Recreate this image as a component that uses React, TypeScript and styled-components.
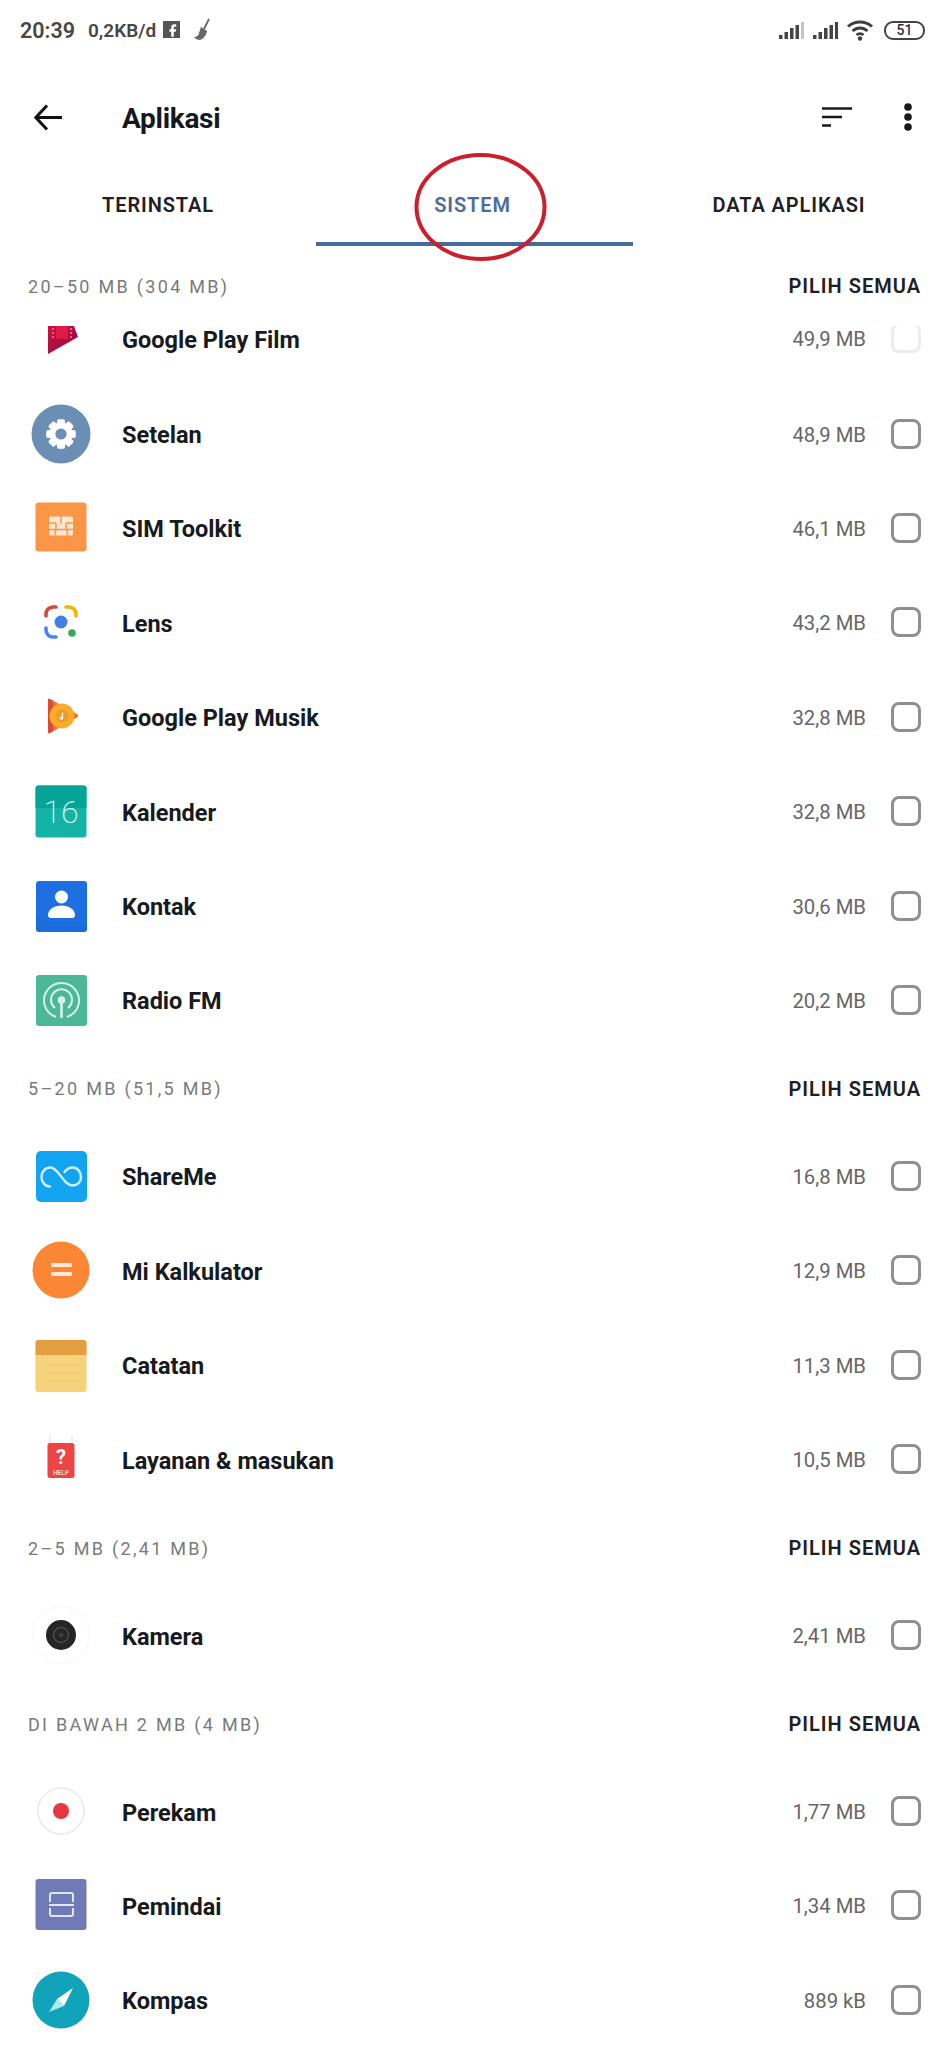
import React from "react";
import styled, { createGlobalStyle } from "styled-components";
import { Facebook } from "lucide-react";

const GlobalStyle = createGlobalStyle`
  html, body {
    margin: 0;
    padding: 0;
    background: #fff;
    font-family: Roboto, "Liberation Sans", sans-serif;
  }
`;

const Page = styled.div`
  position: relative;
  width: 945px;
  height: 2048px;
  overflow: hidden;
  background: #fff;
`;

const StatusBar = styled.div`
  height: 60px;
  padding: 0 20px 0 20px;
  display: flex;
  align-items: center;
  justify-content: space-between;
  color: #474747;
`;

const StatusGroup = styled.div`
  display: flex;
  align-items: center;
`;

const Clock = styled.span`
  font-size: 21.5px;
  font-weight: 600;
  margin-right: 13px;
`;

const NetSpeed = styled.span`
  font-size: 19px;
  font-weight: 600;
  margin-right: 7px;
`;

const FbBadge = styled.span`
  width: 17px;
  height: 17px;
  background: #555;
  color: #fff;
  display: flex;
  align-items: flex-end;
  justify-content: flex-end;
  overflow: hidden;
  margin-right: 13px;
  margin-top: -2px;
`;

const StatusSvg = styled.svg<{ $gap?: number }>`
  display: block;
  margin-left: ${(p) => p.$gap ?? 0}px;
`;

const Battery = styled.span`
  width: 37px;
  height: 15px;
  border: 2px solid #444;
  border-radius: 9px;
  margin-left: 8px;
  font-size: 14px;
  font-weight: 500;
  line-height: 15px;
  text-align: center;
  color: #333;
`;

const Toolbar = styled.div`
  height: 114px;
  padding: 0 33px 0 34px;
  display: flex;
  align-items: center;
`;

const Title = styled.div`
  margin-left: 60px;
  padding-top: 2px;
  flex: 1;
  font-size: 28px;
  font-weight: 700;
  color: #16181d;
  letter-spacing: -0.3px;
`;

const ToolbarActions = styled.div`
  display: flex;
  align-items: center;
  gap: 52px;
`;

const TabBar = styled.div`
  height: 72px;
  display: grid;
  grid-template-columns: 316px 317px 312px;
`;

const Tab = styled.div<{ $active?: boolean }>`
  display: flex;
  align-items: flex-start;
  justify-content: center;
  padding-top: 19px;
  padding-right: ${(p) => (p.$active ? "4px" : "0")};
  box-sizing: border-box;
  font-size: 20px;
  font-weight: 600;
  letter-spacing: 0.9px;
  color: ${(p) => (p.$active ? "#4a6d9f" : "#1e2024")};
  border-bottom: 4px solid ${(p) => (p.$active ? "#466a9c" : "transparent")};
`;

const CircleMark = styled.svg`
  position: absolute;
  left: 412px;
  top: 150px;
  width: 138px;
  height: 114px;
`;

const SectionHeader = styled.div<{ $first?: boolean }>`
  height: ${(p) => (p.$first ? "80px" : "81.6px")};
  padding: 0 24px 0 28px;
  display: flex;
  align-items: center;
  justify-content: space-between;
`;

const SectionLabel = styled.span`
  font-size: 18px;
  letter-spacing: 2.3px;
  color: #7a7a7a;
`;

const SelectAll = styled.span`
  font-size: 20px;
  font-weight: 600;
  letter-spacing: 1px;
  color: #1e2024;
`;

const ClippedRow = styled.div`
  height: 61.4px;
  overflow: hidden;
`;

const ClippedInner = styled.div`
  margin-top: -34px;
`;

const Row = styled.div`
  height: 94.4px;
  padding: 0 24px 0 31px;
  display: flex;
  align-items: center;
`;

const IconSlot = styled.svg`
  width: 60px;
  height: 60px;
  flex: none;
  margin-top: -2px;
`;

const AppName = styled.span`
  margin-left: 31px;
  padding-top: 1px;
  flex: 1;
  font-size: 23.5px;
  font-weight: 700;
  color: #171a20;
`;

const AppSize = styled.span`
  font-size: 20.3px;
  color: #666;
  margin-right: 25px;
`;

const Checkbox = styled.span<{ $faded?: boolean }>`
  width: 30px;
  height: 30px;
  box-sizing: border-box;
  border: 3px solid ${(p) => (p.$faded ? "#ececec" : "#8f8f8f")};
  border-radius: 8px;
  margin-top: -2px;
`;

const gearTeeth = [0, 45, 90, 135, 180, 225, 270, 315];
const filmHoles = [20, 24, 28];

const FilmIcon = () => (
  <IconSlot viewBox="0 0 60 60">
    <defs>
      <linearGradient id="film" x1="0" y1="0" x2="1" y2="1">
        <stop offset="0" stopColor="#d0103f" />
        <stop offset="1" stopColor="#860f45" />
      </linearGradient>
    </defs>
    <polygon points="17,18 43,18 47,29 17,46" fill="url(#film)" />
    {filmHoles.map((y) => (
      <React.Fragment key={y}>
        <rect x="21" y={y} width="2" height="2" fill="#f2627f" />
        <rect x="39" y={y} width="2" height="2" fill="#f2627f" />
      </React.Fragment>
    ))}
    <rect x="25" y="18" width="12" height="13" fill="#e01a48" />
  </IconSlot>
);

const SettingsIcon = () => (
  <IconSlot viewBox="0 0 60 60">
    <circle cx="30" cy="30" r="29.500" fill="#6b8fb4" />
    {gearTeeth.map((a) => (
      <rect key={a} x="26.200" y="15.500" width="7.600" height="29" rx="1.500" fill="#fff" transform={`rotate(${a} 30 30)`} />
    ))}
    <circle cx="30" cy="30" r="11.500" fill="#fff" />
    <circle cx="30" cy="30" r="5.600" fill="#6b8fb4" />
  </IconSlot>
);

const SimIcon = () => (
  <IconSlot viewBox="0 0 60 60">
    <rect x="4.500" y="4.500" width="51" height="49" rx="3" fill="#fb9646" />
    <rect x="18" y="18.500" width="24" height="19" rx="1.500" fill="#fbe6d0" />
    <path d="M18 25h7M35 25h7M18 31.500h24M30 18.500v6.500M25 25v6.500M35 25v6.500M24 31.500V37.500M36 31.500V37.500" stroke="#fb9646" strokeWidth="1.500" fill="none" />
  </IconSlot>
);

const LensIcon = () => (
  <IconSlot viewBox="0 0 60 60">
    <path d="M15 24v-2a7 7 0 0 1 7-7h3" stroke="#db4437" strokeWidth="3.600" fill="none" strokeLinecap="round" />
    <path d="M35 15h3a7 7 0 0 1 7 7v2" stroke="#f4b400" strokeWidth="3.600" fill="none" strokeLinecap="round" />
    <path d="M15 36v2a7 7 0 0 0 7 7h3" stroke="#4285f4" strokeWidth="3.600" fill="none" strokeLinecap="round" />
    <circle cx="30" cy="30" r="6.500" fill="#3f7fe8" />
    <circle cx="41" cy="41" r="3.800" fill="#34a853" />
  </IconSlot>
);

const MusicIcon = () => (
  <IconSlot viewBox="0 0 60 60">
    <path d="M17 13c0-1 1-1.500 2-1L46 27c1.500 1 1.500 2.500 0 3.500L19 46c-1 .5-2 0-2-1z" fill="#ef6f2e" />
    <path d="M17 13c0-1 1-1.500 2-1l3 1.700v30.500L19 46c-1 .5-2 0-2-1z" fill="#dc4b35" />
    <circle cx="31" cy="29" r="12.500" fill="#f7ae28" />
    <circle cx="31" cy="29" r="6.500" fill="#f39a2a" />
    <path d="M31.500 25.500v5.500" stroke="#fff" strokeWidth="1.300" />
    <circle cx="30.300" cy="31.300" r="1.500" fill="#fff" />
  </IconSlot>
);

const CalendarIcon = () => (
  <IconSlot viewBox="0 0 60 60">
    <rect x="4.500" y="4.500" width="51" height="52" rx="3" fill="#13b3a6" />
    <path d="M4.500 27V7.500a3 3 0 0 1 3-3h45a3 3 0 0 1 3 3V27z" fill="#05a497" />
    <text x="30" y="42" textAnchor="middle" fontFamily="Roboto, sans-serif" fontWeight="200" fontSize="32" fill="#d6f7f3">16</text>
  </IconSlot>
);

const ContactIcon = () => (
  <IconSlot viewBox="0 0 60 60">
    <rect x="5" y="5" width="51" height="51" rx="3" fill="#1e6fe2" />
    <path d="M5 42l0 11a3 3 0 0 0 3 3h45a3 3 0 0 0 3-3V46H18z" fill="#1b64cf" opacity="0.35" />
    <circle cx="30.500" cy="21" r="6.500" fill="#fff" />
    <path d="M17 39c0-6.500 8-9.500 13.500-9.500S44 32.500 44 39a3 3 0 0 1-3 3H20a3 3 0 0 1-3-3z" fill="#fff" />
  </IconSlot>
);

const RadioIcon = () => (
  <IconSlot viewBox="0 0 60 60">
    <rect x="5" y="5" width="51" height="51" rx="3" fill="#4cb897" />
    <g fill="none" stroke="#d6f2e8" strokeWidth="2">
      <path d="M25 47a17.500 17.500 0 1 1 11 0" />
      <path d="M24 38a10.500 10.500 0 1 1 13 0" />
    </g>
    <circle cx="30.500" cy="30" r="3.800" fill="#d6f2e8" />
    <rect x="29.200" y="30" width="2.600" height="18" fill="#d6f2e8" />
  </IconSlot>
);

const ShareIcon = () => (
  <IconSlot viewBox="0 0 60 60">
    <rect x="5" y="5" width="51" height="51" rx="5" fill="#12a4f1" />
    <path d="M19 40.500c-5 0-8.500-4.500-8.500-9.500s3.500-9.500 9-9.500c8 0 13 18 22 18 5 0 8.500-3.500 8.500-8.500s-3.500-9.500-8.500-9.500c-3.500 0-6 2-8 4.500" fill="none" stroke="#d4effd" strokeWidth="2.400" strokeLinecap="round" />
  </IconSlot>
);

const CalcIcon = () => (
  <IconSlot viewBox="0 0 60 60">
    <circle cx="30" cy="30" r="28.500" fill="#fa8636" />
    <rect x="20" y="23" width="21" height="4" fill="#fde7d6" />
    <rect x="20" y="32" width="21" height="4" fill="#fde7d6" />
  </IconSlot>
);

const NotesIcon = () => (
  <IconSlot viewBox="0 0 60 60">
    <rect x="4.500" y="5" width="51" height="52" rx="3" fill="#f6d27b" />
    <path d="M4.500 20V8a3 3 0 0 1 3-3h45a3 3 0 0 1 3 3v12z" fill="#e59d42" />
    <path d="M12 30h36M12 38h36M12 46h36" stroke="#eec46f" strokeWidth="1" />
  </IconSlot>
);

const HelpIcon = () => (
  <IconSlot viewBox="0 0 60 60">
    <path d="M19 6v9M41 6v9" stroke="#ddd" strokeWidth="1" />
    <rect x="16.500" y="14" width="27" height="35" rx="2.500" fill="#ee4444" />
    <text x="30" y="35" textAnchor="middle" fontFamily="Roboto, sans-serif" fontWeight="700" fontSize="20" fill="#fff">?</text>
    <text x="30" y="45.500" textAnchor="middle" fontFamily="Roboto, sans-serif" fontWeight="700" fontSize="6.500" fill="#fbd5d5">HELP</text>
  </IconSlot>
);

const CameraIcon = () => (
  <IconSlot viewBox="0 0 60 60">
    <circle cx="30" cy="30" r="28.500" fill="#fff" stroke="#f6f6f6" strokeWidth="1" />
    <circle cx="30" cy="30" r="15" fill="#252525" />
    <circle cx="30" cy="30" r="7.500" fill="none" stroke="#4b4b4b" strokeWidth="1.500" />
    <circle cx="30" cy="30" r="2.500" fill="#3c3c3c" />
  </IconSlot>
);

const RecorderIcon = () => (
  <IconSlot viewBox="0 0 60 60">
    <circle cx="30" cy="30" r="23" fill="#fff" stroke="#e9e9e9" strokeWidth="1.500" />
    <circle cx="30" cy="30" r="8" fill="#e2383f" />
  </IconSlot>
);

const ScannerIcon = () => (
  <IconSlot viewBox="0 0 60 60">
    <rect x="4.500" y="4" width="51" height="51" rx="3" fill="#6f7ab6" />
    <path d="M19 27v-7a2 2 0 0 1 2-2h19a2 2 0 0 1 2 2v7M19 33v6a2 2 0 0 0 2 2h19a2 2 0 0 0 2-2v-6" fill="none" stroke="#e3e6f4" strokeWidth="2" />
    <path d="M18 30h25" stroke="#e3e6f4" strokeWidth="2" />
  </IconSlot>
);

const CompassIcon = () => (
  <IconSlot viewBox="0 0 60 60">
    <circle cx="30" cy="30" r="28.500" fill="#10a3b9" />
    <polygon points="42,18 33,36 26,29" fill="#fff" />
    <polygon points="18,42 26,29 33,36" fill="#aee8f0" />
  </IconSlot>
);

type AppEntry = { name: string; size: string; Icon: () => React.JSX.Element };
type Section = { label: string; apps: AppEntry[] };

const sections: Section[] = [
  {
    label: "20–50 MB (304 MB)",
    apps: [
      { name: "Google Play Film", size: "49,9 MB", Icon: FilmIcon },
      { name: "Setelan", size: "48,9 MB", Icon: SettingsIcon },
      { name: "SIM Toolkit", size: "46,1 MB", Icon: SimIcon },
      { name: "Lens", size: "43,2 MB", Icon: LensIcon },
      { name: "Google Play Musik", size: "32,8 MB", Icon: MusicIcon },
      { name: "Kalender", size: "32,8 MB", Icon: CalendarIcon },
      { name: "Kontak", size: "30,6 MB", Icon: ContactIcon },
      { name: "Radio FM", size: "20,2 MB", Icon: RadioIcon },
    ],
  },
  {
    label: "5–20 MB (51,5 MB)",
    apps: [
      { name: "ShareMe", size: "16,8 MB", Icon: ShareIcon },
      { name: "Mi Kalkulator", size: "12,9 MB", Icon: CalcIcon },
      { name: "Catatan", size: "11,3 MB", Icon: NotesIcon },
      { name: "Layanan & masukan", size: "10,5 MB", Icon: HelpIcon },
    ],
  },
  {
    label: "2–5 MB (2,41 MB)",
    apps: [{ name: "Kamera", size: "2,41 MB", Icon: CameraIcon }],
  },
  {
    label: "DI BAWAH 2 MB (4 MB)",
    apps: [
      { name: "Perekam", size: "1,77 MB", Icon: RecorderIcon },
      { name: "Pemindai", size: "1,34 MB", Icon: ScannerIcon },
      { name: "Kompas", size: "889 kB", Icon: CompassIcon },
    ],
  },
];

const Signal = ({ full, gap }: { full?: boolean; gap?: number }) => (
  <StatusSvg $gap={gap} width="25" height="17" viewBox="0 0 25 17">
    <rect x="0" y="13" width="3.500" height="4" fill="#444" />
    <rect x="5.500" y="10" width="3.500" height="7" fill="#444" />
    <rect x="11" y="6" width="3.500" height="11" fill="#444" />
    <rect x="16.500" y="3" width="3.500" height="14" fill="#444" />
    <rect x="22" y="0" width="3" height="17" fill={full ? "#444" : "#c4c4c4"} />
  </StatusSvg>
);

const Wifi = ({ gap }: { gap?: number }) => (
  <StatusSvg $gap={gap} width="30" height="22" viewBox="0 0 30 22">
    <g fill="none" stroke="#3e3e3e" strokeWidth="2.800">
      <path d="M2 7.500c7-6 17-6 24 0" />
      <path d="M6.500 12c4.500-4 10.500-4 15 0" />
      <path d="M10.500 16c2-1.800 5-1.800 7 0" />
    </g>
    <circle cx="14" cy="19.500" r="2.200" fill="#3e3e3e" />
  </StatusSvg>
);

const Broom = () => (
  <StatusSvg width="18" height="24" viewBox="0 0 18 24">
    <path d="M16 1l-5 10" stroke="#666" strokeWidth="1.800" />
    <path d="M8 9l6 4c-1 5-4 8-7 9-2 0-5-1-6-3 3 0 5-2 5-4z" fill="#666" />
  </StatusSvg>
);

export default function App() {
  return (
    <Page>
      <GlobalStyle />
      <StatusBar>
        <StatusGroup>
          <Clock>20:39</Clock>
          <NetSpeed>0,2KB/d</NetSpeed>
          <FbBadge>
            <Facebook size={15} fill="#fff" stroke="none" />
          </FbBadge>
          <Broom />
        </StatusGroup>
        <StatusGroup>
          <Signal />
          <Signal full gap={9} />
          <Wifi gap={8} />
          <Battery>51</Battery>
        </StatusGroup>
      </StatusBar>

      <Toolbar>
        <svg width="28" height="27" viewBox="0 0 28 27">
          <path d="M13 1.500L1.800 13.500 13 25.500M2 13.500h26" fill="none" stroke="#111" strokeWidth="3" />
        </svg>
        <Title>Aplikasi</Title>
        <ToolbarActions>
          <svg width="30" height="20" viewBox="0 0 30 20">
            <path d="M0 1.500h30M0 10h20M0 18.500h9" stroke="#1a1a1a" strokeWidth="2.600" />
          </svg>
          <svg width="8" height="28" viewBox="0 0 8 28">
            <circle cx="4" cy="4" r="3.800" fill="#1a1a1a" />
            <circle cx="4" cy="14" r="3.800" fill="#1a1a1a" />
            <circle cx="4" cy="24" r="3.800" fill="#1a1a1a" />
          </svg>
        </ToolbarActions>
      </Toolbar>

      <TabBar>
        <Tab>TERINSTAL</Tab>
        <Tab $active>SISTEM</Tab>
        <Tab>DATA APLIKASI</Tab>
      </TabBar>

      {sections.map((section, si) => (
        <div key={section.label}>
          <SectionHeader $first={si === 0}>
            <SectionLabel>{section.label}</SectionLabel>
            <SelectAll>PILIH SEMUA</SelectAll>
          </SectionHeader>
          {section.apps.map((app, ai) => {
            const clipped = si === 0 && ai === 0;
            const row = (
              <Row>
                <app.Icon />
                <AppName>{app.name}</AppName>
                <AppSize>{app.size}</AppSize>
                <Checkbox $faded={clipped} />
              </Row>
            );
            return clipped ? (
              <ClippedRow key={app.name}>
                <ClippedInner>{row}</ClippedInner>
              </ClippedRow>
            ) : (
              <div key={app.name}>{row}</div>
            );
          })}
        </div>
      ))}

      <CircleMark viewBox="0 0 138 114">
        <ellipse cx="68.500" cy="57" rx="64" ry="52" fill="none" stroke="#cc1f2b" strokeWidth="4" />
      </CircleMark>
    </Page>
  );
}
